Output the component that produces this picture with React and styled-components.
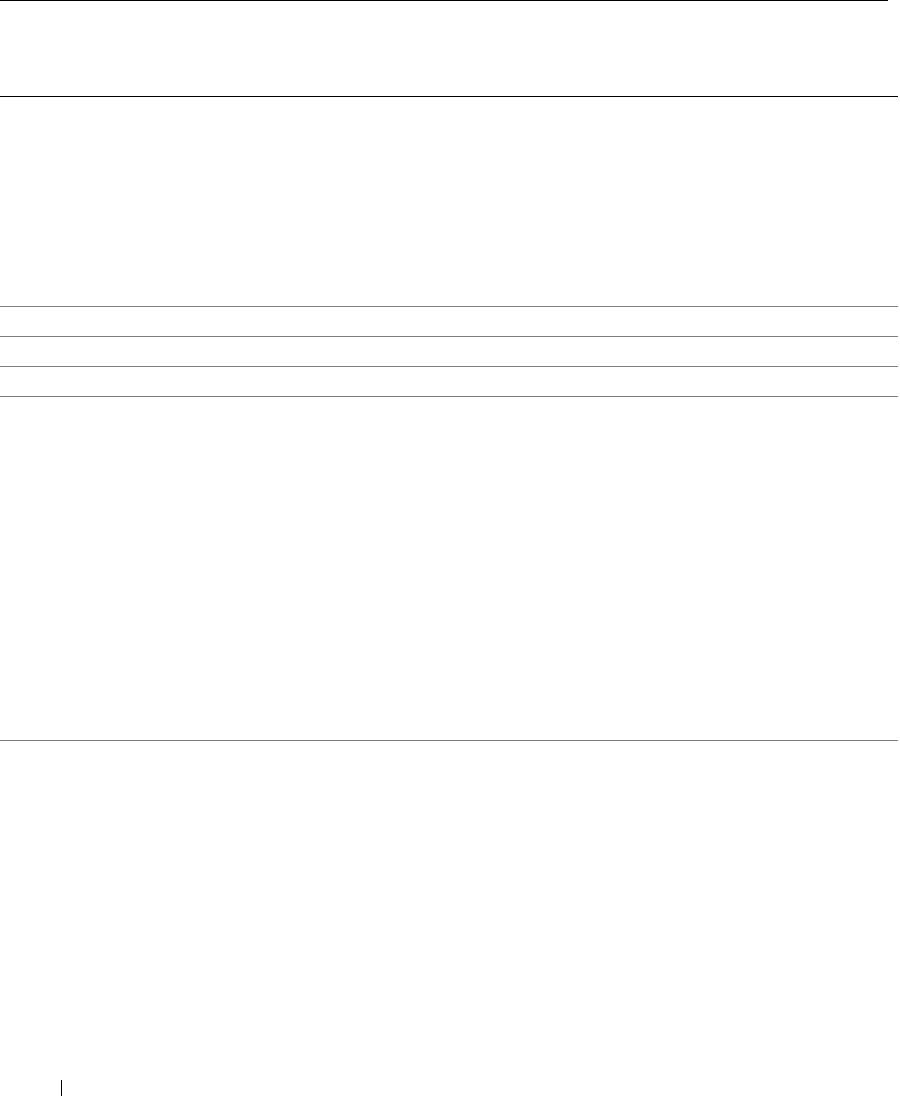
import React from "react";
import styled, { createGlobalStyle } from "styled-components";

const Global = createGlobalStyle`
  html, body { margin: 0; padding: 0; background: #fff; }
  body { font-family: "Liberation Sans", Arial, sans-serif; }
`;

const Page = styled.div`
  width: 900px;
  height: 1096px;
  display: flex;
  flex-direction: column;
  background: #fff;
`;

const TopRule = styled.div`
  width: 888px;
  height: 1px;
  background: #000;
`;

const Header = styled.header`
  width: 898px;
  height: 95px;
  border-bottom: 1px solid #000;
`;

const Spacer = styled.div`
  width: 898px;
  height: ${(p) => p.$h}px;
`;

const Rule = styled.div`
  width: 898px;
  height: 29px;
  border-top: 1px solid #7f7f7f;
`;

const Section = styled.div`
  width: 898px;
  height: 343px;
  border-top: 1px solid #7f7f7f;
  border-bottom: 1px solid #7f7f7f;
`;

const Footer = styled.footer`
  flex: 1;
  display: flex;
  align-items: flex-end;
  padding-left: 61px;
`;

const Mark = styled.div`
  width: 1px;
  height: 16px;
  background: #000;
`;

export default function App() {
  return (
    <Page>
      <Global />
      <TopRule />
      <Header />
      <Spacer $h={209} />
      <Rule />
      <Rule />
      <Rule />
      <Section />
      <Footer>
        <Mark />
      </Footer>
    </Page>
  );
}
